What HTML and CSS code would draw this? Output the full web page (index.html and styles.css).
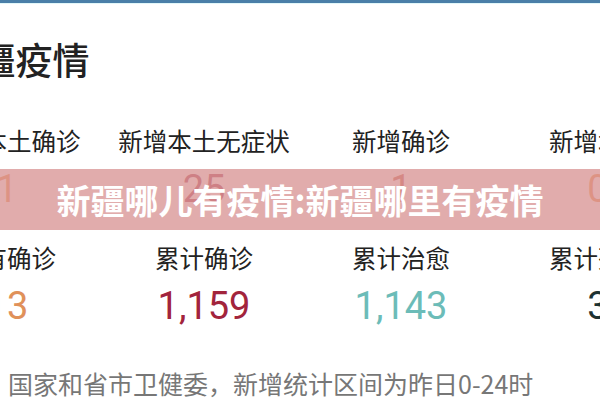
FILE: index.html
```html
<!DOCTYPE html>
<html lang="zh-CN">
<head>
<meta charset="utf-8">
<title>新疆哪儿有疫情:新疆哪里有疫情</title>
<link rel="stylesheet" href="styles.css">
</head>
<body>
<div class="topbar"></div>
<main class="page">
  <h1 class="title">新疆疫情</h1>
  <section class="stats">
    <div class="cell"><span class="label">新增本土确诊</span><span class="value orange">1</span></div>
    <div class="cell"><span class="label">新增本土无症状</span><span class="value maroon">25</span></div>
    <div class="cell"><span class="label">新增确诊</span><span class="value red">1</span></div>
    <div class="cell"><span class="label">新增境外</span><span class="value orange">0</span></div>
  </section>
  <section class="stats second">
    <div class="cell"><span class="label">现有确诊</span><span class="value tan">13</span></div>
    <div class="cell"><span class="label">累计确诊</span><span class="value maroon">1,159</span></div>
    <div class="cell"><span class="label">累计治愈</span><span class="value teal">1,143</span></div>
    <div class="cell"><span class="label">累计死亡</span><span class="value dark">3</span></div>
  </section>
  <p class="source">数据来源：国家和省市卫健委，新增统计区间为昨日0-24时</p>
</main>
<div class="banner">新疆哪儿有疫情:新疆哪里有疫情</div>
</body>
</html>
```
FILE: styles.css
```css
html, body {
  margin: 0;
  padding: 0;
  background: #ffffff;
}

body {
  width: 600px;
  height: 400px;
  overflow: hidden;
  position: relative;
  font-family: "Noto Sans CJK SC", "Noto Sans", sans-serif;
  color: #222;
}

.topbar {
  height: 3px;
  background: #4a7fa8;
  border-bottom: 1px solid #e2f7f9;
}

/* page is wider than the window; first column is centred on the left edge */
.page {
  width: 788px;
  margin-left: -91.5px;
}

.title {
  margin: 37px 0 0 33px;
  font-size: 37px;
  line-height: 37px;
  font-weight: 500;
  color: #222;
  white-space: nowrap;
}

.stats {
  display: grid;
  grid-template-columns: repeat(4, 197px);
  margin-top: 51px;
}

.stats.second {
  margin-top: 38px;
}

.cell {
  display: flex;
  flex-direction: column;
  align-items: center;
  gap: 18px;
  white-space: nowrap;
}

.label {
  font-size: 24.5px;
  line-height: 24px;
  color: #222;
}

.value {
  font-family: Roboto, "Noto Sans", sans-serif;
  font-size: 38px;
  line-height: 37px;
}

.orange { color: #e8833a; }
.tan { color: #e0915a; }
.maroon { color: #a2243c; }
.red { color: #c44a3a; }
.teal { color: #6cbcb8; }
.dark { color: #1e3232; }

.source {
  margin: 46px 0 0 -25.5px;
  font-size: 25px;
  line-height: 25px;
  color: #777;
  white-space: nowrap;
}

.banner {
  position: absolute;
  top: 169px;
  left: 0;
  right: 0;
  height: 61px;
  display: flex;
  align-items: center;
  justify-content: center;
  background: rgba(218, 151, 151, 0.8);
  color: #fff;
  font-size: 34px;
  font-weight: 700;
  white-space: nowrap;
}
```
